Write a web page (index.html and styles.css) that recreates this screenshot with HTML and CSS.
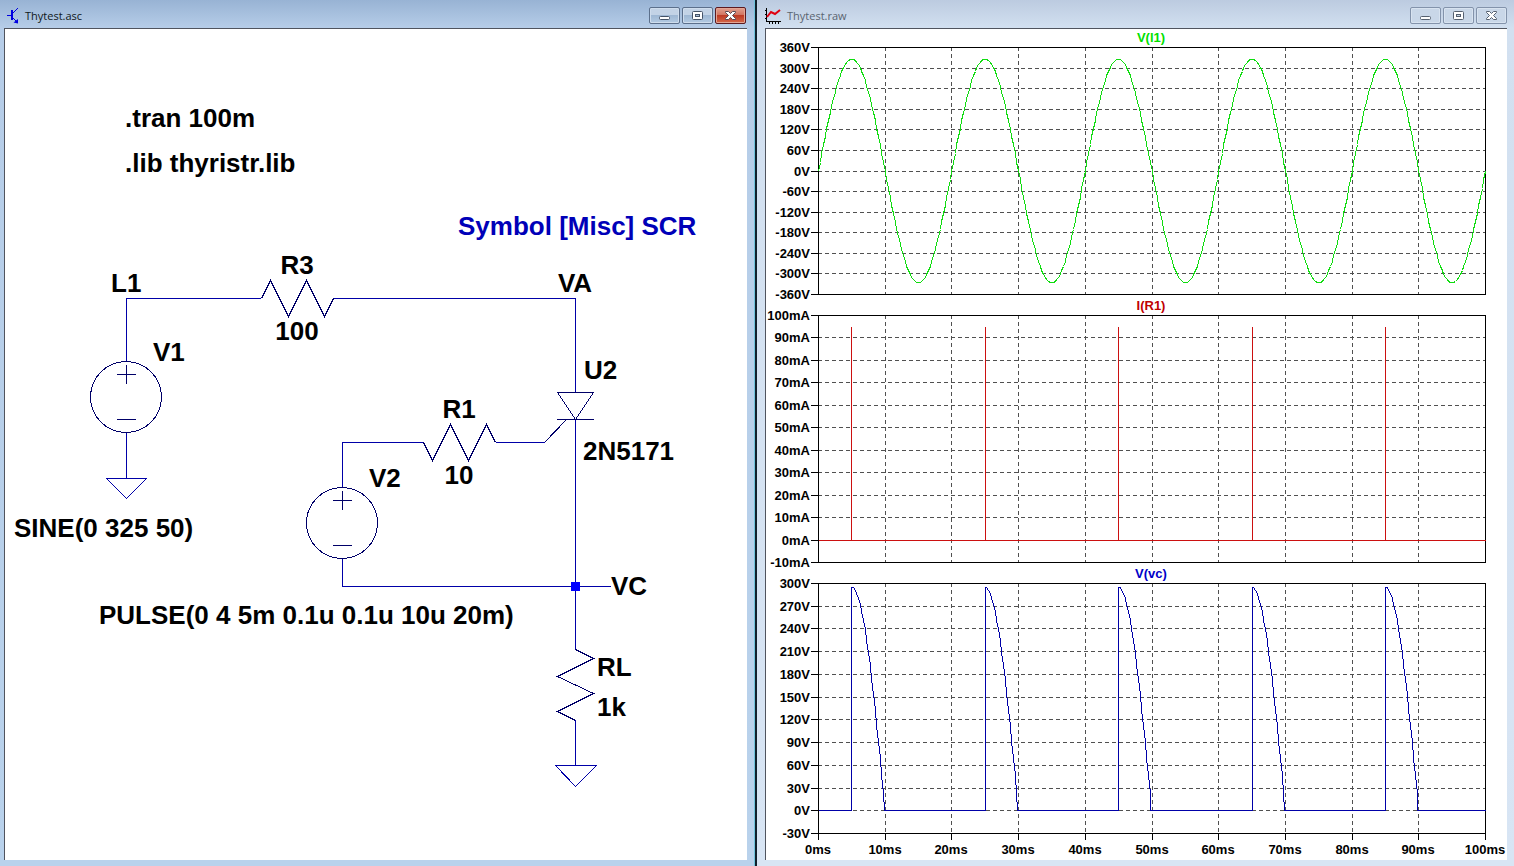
FILE: index.html
```html
<!DOCTYPE html>
<html lang="en">
<head>
<meta charset="utf-8">
<title>Thytest</title>
<link rel="stylesheet" href="styles.css">
</head>
<body>
<main class="workspace">
  <section class="window window-active" aria-label="Thytest.asc">
    <header class="titlebar">
      <svg class="title-icon" viewBox="0 0 16 16" width="16" height="16" aria-hidden="true">
        <g fill="none" stroke="#0000e0" shape-rendering="crispEdges">
          <path d="M0 7.500H4"/><path d="M5 2V12" stroke-width="2"/>
          <path d="M5 6L10.500 0.500M5 9L10 14"/>
        </g>
        <path d="M11 15.500V11L6.500 14.500z" fill="#0000e0"/>
      </svg>
      <span class="title">Thytest.asc</span>
      <div class="controls">
        <button class="control" aria-label="Minimize"><svg viewBox="0 0 29 15" width="29" height="15"><rect x="9.500" y="8.500" width="10" height="3" rx="1" fill="#fff" stroke="#465468"/></svg></button>
        <button class="control" aria-label="Maximize"><svg viewBox="0 0 29 15" width="29" height="15"><rect x="9.500" y="3.500" width="10" height="8" rx="1" fill="#fff" stroke="#465468"/><rect x="12.500" y="6.500" width="4" height="2" fill="#a9bfd9" stroke="#465468"/></svg></button>
        <button class="control control-close" aria-label="Close"><svg viewBox="0 0 29 15" width="29" height="15"><path d="M9.500 3.500H12.500L14.500 5.500L16.500 3.500H19.500V4.500L16.500 7.500L19.500 10.500V11.500H16.500L14.500 9.500L12.500 11.500H9.500V10.500L12.500 7.500L9.500 4.500z" fill="#fff" stroke="#564a55"/></svg></button>
      </div>
    </header>
    <div class="client">
      <svg class="schematic" viewBox="5 29 742 831" preserveAspectRatio="xMinYMin meet" role="img" aria-label="Thyristor test circuit">
        <g class="wire">
          <path d="M126.500 361V298.500H261M333 298.500H575.500V392M126.500 432V478M342.500 487V442.500H424M496 442.500H545M342.500 558V586.500H611M575.500 419V649M575.500 720V765"/>
          <path d="M106.500 478.500H146.500L126.500 498.500zM555.500 765.500H596.500L575.500 786.500z"/>
        </g>
        <g class="symbol">
          <path d="M261.500 298.500L270.500 280.500L288.500 316.500L306.500 280.500L324.500 316.500L333.500 298.500"/>
          <path d="M423.500 442.500L432.500 460.500L450.500 424.500L468.500 460.500L486.500 424.500L495.500 442.500"/>
          <path d="M575.500 649.500L593.500 658.500L557.500 676.500L593.500 693.500L557.500 711.500L575.500 720.500"/>
          <circle cx="126" cy="397" r="35.500"/><circle cx="342" cy="523" r="35.500"/>
          <path d="M117 374.500H136M126.500 365V384M117 419.500H136M333 500.500H352M342.500 491V510M333 545.500H352"/>
          <path d="M557.500 392.500H593.500L575.500 419.500zM557 419.500H594M566.500 419.500L544.500 442.500"/>
        </g>
        <rect class="junction" x="571" y="582" width="9" height="9"/>
        <g class="label">
          <text x="125" y="127">.tran 100m</text>
          <text x="125" y="172">.lib thyristr.lib</text>
          <text class="note" x="458" y="235">Symbol [Misc] SCR</text>
          <text x="111" y="292">L1</text>
          <text class="mid" x="297" y="274">R3</text>
          <text class="mid" x="297" y="340">100</text>
          <text x="153" y="361">V1</text>
          <text class="mid" x="575" y="292">VA</text>
          <text x="584" y="379">U2</text>
          <text x="583" y="460">2N5171</text>
          <text class="mid" x="459" y="418">R1</text>
          <text class="mid" x="459" y="484">10</text>
          <text x="369" y="487">V2</text>
          <text x="14" y="537">SINE(0 325 50)</text>
          <text x="611" y="595">VC</text>
          <text x="99" y="624">PULSE(0 4 5m 0.1u 0.1u 10u 20m)</text>
          <text x="597" y="676">RL</text>
          <text x="597" y="716">1k</text>
        </g>
      </svg>
    </div>
  </section>

  <section class="window" aria-label="Thytest.raw">
    <header class="titlebar">
      <svg class="title-icon" viewBox="0 0 16 16" width="16" height="16" aria-hidden="true">
        <path d="M1.500 0V14M1 13.500H16M0 2.500H2M0 6.500H2M0 10.500H2M4.500 13V16M7.500 13V16M10.500 13V16M13.500 13V16" fill="none" stroke="#000" shape-rendering="crispEdges"/>
        <path d="M2 9L6 4L10 6L15 2" fill="none" stroke="#e00010" stroke-width="2"/>
      </svg>
      <span class="title">Thytest.raw</span>
      <div class="controls">
        <button class="control" aria-label="Minimize"><svg viewBox="0 0 29 15" width="29" height="15"><rect x="9.500" y="8.500" width="10" height="3" rx="1" fill="#fff" stroke="#566170"/></svg></button>
        <button class="control" aria-label="Maximize"><svg viewBox="0 0 29 15" width="29" height="15"><rect x="9.500" y="3.500" width="10" height="8" rx="1" fill="#fff" stroke="#566170"/><rect x="12.500" y="6.500" width="4" height="2" fill="#c5d4e6" stroke="#566170"/></svg></button>
        <button class="control" aria-label="Close"><svg viewBox="0 0 29 15" width="29" height="15"><path d="M9.500 3.500H12.500L14.500 5.500L16.500 3.500H19.500V4.500L16.500 7.500L19.500 10.500V11.500H16.500L14.500 9.500L12.500 11.500H9.500V10.500L12.500 7.500L9.500 4.500z" fill="#fff" stroke="#566170"/></svg></button>
      </div>
    </header>
    <div class="client">
      <svg class="plots" id="plots" viewBox="766 29 741 831" preserveAspectRatio="xMinYMin meet" role="img" aria-label="Waveforms of V(l1), I(R1) and V(vc)"></svg>
    </div>
  </section>
</main>
<script src="plots.js"></script>
</body>
</html>
```
FILE: styles.css
```css
* { box-sizing: border-box; }

body {
  margin: 0;
  height: 100vh;
  overflow: hidden;
  font-family: "Open Sans", "Noto Sans", sans-serif;
}

.workspace {
  display: grid;
  grid-template-columns: 1fr 1fr;
  grid-template-rows: 100%;
  height: 100%;
}

.window {
  display: flex;
  flex-direction: column;
  min-width: 0;
  min-height: 0;
  padding: 0 7px 6px 8px;
  background: linear-gradient(#bccbe0 0, #d2e0f0 28px, #d8e5f4 100%);
}

.window-active {
  padding: 0 8px 6px 4px;
  background: linear-gradient(#98b3d4 0, #b6cde8 28px, #b9d2ec 100%);
  border-right: 2px solid #10202c;
  box-shadow: inset -1px 0 #70c4dc;
}

.titlebar {
  display: flex;
  flex: none;
  align-items: center;
  height: 28px;
  padding: 3px 0 0;
}

.window-active .titlebar { padding: 3px 1px 0 3px; }

.title-icon { flex: none; }

.title {
  flex: 1;
  padding-left: 6px;
  font-size: 11px;
  line-height: 16px;
  color: #5a6470;
}

.window-active .title {
  padding-left: 2px;
  color: #101820;
}

.controls {
  display: flex;
  gap: 2px;
}

.control {
  width: 31px;
  height: 17px;
  padding: 0;
  border: 1px solid #8393ab;
  border-radius: 2px;
  background: #c9d7e8;
  box-shadow: inset 0 0 0 1px #d8e3f0;
}

.control svg { display: block; }

.window-active .control {
  border-color: #5c708c;
  background: linear-gradient(#c3d3e6 45%, #9fb8d4 50%, #b3cae2);
  box-shadow: inset 0 0 0 1px #cfdded;
}

.window-active .control-close {
  border-color: #5c1a20;
  background: linear-gradient(#e0a090 0, #d27562 45%, #bd3a24 50%, #d4684a);
  box-shadow: inset 0 0 0 1px #e2a594;
}

.client {
  flex: 1;
  min-height: 0;
  background: #fff;
  border-top: 1px solid #50545e;
  border-left: 1px solid #50545e;
}

.schematic,
.plots {
  display: block;
  width: 100%;
  height: 100%;
  font-family: "Liberation Sans", Arial, sans-serif;
  font-weight: bold;
}

.wire,
.symbol {
  fill: none;
  shape-rendering: crispEdges;
}

.wire { stroke: #0000a8; }
.symbol { stroke: #000068; }
.junction { fill: #0000ff; }

.label { font-size: 26px; }
.note { fill: #0000b8; }
.mid { text-anchor: middle; }

.plots { font-size: 13px; }

.frame,
.grid,
.trace {
  fill: none;
  shape-rendering: crispEdges;
}

.frame { stroke: #000; }

.grid {
  stroke: #505050;
  stroke-dasharray: 4 3;
}

.tick { text-anchor: end; }

.trace-green { stroke: #10dc10; }
.trace-red { stroke: #cc1010; }
.trace-blue { stroke: #0000a8; }

.name-green { fill: #00e000; }
.name-red { fill: #c00000; }
.name-blue { fill: #0000c8; }
```
FILE: plots.js
```js
const svg = document.getElementById("plots");
const LEFT = 818;
const RIGHT = 1485;
const xAt = ms => LEFT + (RIGHT - LEFT) * ms / 100;

function add(tag, attrs, text) {
  const el = document.createElementNS("http://www.w3.org/2000/svg", tag);
  for (const key in attrs) el.setAttribute(key, attrs[key]);
  if (text) el.textContent = text;
  svg.appendChild(el);
}

const line = points => "M" + points.map(([x, y]) => `${Math.round(x) + 0.5} ${Math.round(y) + 0.5}`).join("L");

const sine = [];
for (let t = 0; t <= 100; t += 0.25) sine.push([t, 325 * Math.sin(Math.PI * t / 10)]);

const gate = [[0, 0]];
const load = [[0, 0]];
for (let start = 5; start < 100; start += 20) {
  gate.push([start, 0], [start, 95], [start, 0]);
  load.push([start, 0]);
  for (let t = 0; t <= 4.75; t += 0.25) load.push([start + t, 295 * Math.cos(Math.PI * t / 10)]);
  load.push([start + 4.85, 0]);
}
gate.push([100, 0]);
load.push([100, 0]);

const plots = [
  { name: "V(l1)", color: "green", unit: "V", max: 360, min: -360, step: 60, top: 47, bottom: 294, data: sine },
  { name: "I(R1)", color: "red", unit: "mA", max: 100, min: -10, step: 10, top: 315, bottom: 562, data: gate },
  { name: "V(vc)", color: "blue", unit: "V", max: 300, min: -30, step: 30, top: 583, bottom: 833, data: load }
];

for (const p of plots) {
  const yAt = v => p.top + (p.max - v) / (p.max - p.min) * (p.bottom - p.top);
  for (let v = p.max; v >= p.min; v -= p.step) {
    const y = Math.round(yAt(v));
    if (v < p.max && v > p.min) add("path", { class: "grid", d: `M${LEFT} ${y + 0.5}H${RIGHT}` });
    add("path", { class: "frame", d: `M811 ${y + 0.5}H${LEFT}` });
    add("text", { class: "tick", x: 810, y: y + 5 }, v + p.unit);
  }
  for (let ms = 10; ms < 100; ms += 10) {
    add("path", { class: "grid", d: `M${Math.round(xAt(ms)) + 0.5} ${p.top}V${p.bottom}` });
  }
  add("path", { class: "frame", d: `M${LEFT + 0.5} ${p.top + 0.5}H${RIGHT + 0.5}V${p.bottom + 0.5}H${LEFT + 0.5}z` });
  add("path", { class: `trace trace-${p.color}`, d: line(p.data.map(([t, v]) => [xAt(t), yAt(v)])) });
  add("text", { class: `mid name-${p.color}`, x: 1151, y: p.top - 5 }, p.name);
}

for (let ms = 0; ms <= 100; ms += 10) {
  const x = Math.round(xAt(ms));
  add("path", { class: "frame", d: `M${x + 0.5} 833V840` });
  add("text", { class: "mid", x, y: 854 }, ms + "ms");
}
```
